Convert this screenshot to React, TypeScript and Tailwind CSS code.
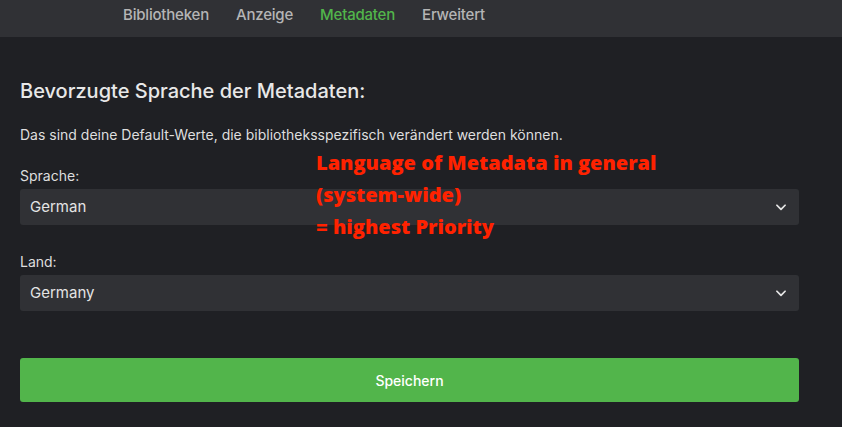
import React from "react";

const Chevron = () => (
  <svg width="14" height="14" viewBox="0 0 24 24" fill="none" stroke="#e6e6e6" strokeWidth="3" strokeLinecap="round" strokeLinejoin="round">
    <path d="M5 9l7 7 7-7" />
  </svg>
);

const Select = ({ value }: { value: string }) => (
  <div className="flex h-[36px] items-center justify-between rounded-[3px] bg-[#303135] pl-[10px] pr-[11px]">
    <span className="text-[15px] text-[#e4e4e4]">{value}</span>
    <Chevron />
  </div>
);

export default function App() {
  return (
    <div className="relative h-[427px] w-[842px] overflow-hidden bg-[#1f2024]" style={{ fontFamily: "Inter, 'Noto Sans', sans-serif" }}>
      <div className="flex h-[37px] items-center gap-[27px] bg-[#303135] pl-[123px] pb-[7px] text-[15px] font-medium tracking-[-0.2px] text-[#b5b5b5]">
        <span>Bibliotheken</span>
        <span>Anzeige</span>
        <span className="text-[#52b54b]">Metadaten</span>
        <span>Erweitert</span>
      </div>
      <div className="px-[20px] pr-[43px]">
        <h2 className="mt-[39px] text-[20px] font-medium text-[#e8e8e8]">Bevorzugte Sprache der Metadaten:</h2>
        <p className="mt-[18px] text-[14px] text-[#dedede]">Das sind deine Default-Werte, die bibliotheksspezifisch verändert werden können.</p>
        <div className="mt-[20px] text-[14px] text-[#dedede]">Sprache:</div>
        <div className="mt-[3px]"><Select value="German" /></div>
        <div className="mt-[26px] text-[14px] text-[#dedede]">Land:</div>
        <div className="mt-[3px]"><Select value="Germany" /></div>
        <button className="mt-[47px] flex h-[44px] w-full items-center justify-center rounded-[3px] bg-[#52b54b] text-[14px] font-medium text-white">Speichern</button>
      </div>
      <div className="absolute left-[316px] top-[147px] text-[20px] font-extrabold leading-[32px] text-[#ff2200]" style={{ fontFamily: "'Open Sans', sans-serif" }}>
        <div>Language of Metadata in general</div>
        <div>(system-wide)</div>
        <div>= highest Priority</div>
      </div>
    </div>
  );
}
